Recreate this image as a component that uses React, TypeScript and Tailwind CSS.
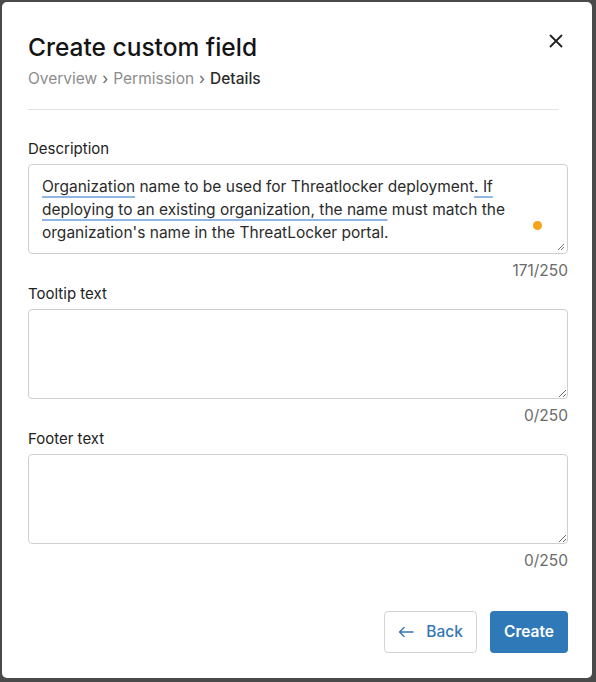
import React from "react";

const font = { fontFamily: "Inter, 'Noto Sans', sans-serif" };

function Counter({ value }: { value: string }) {
  return (
    <div className="text-right text-[15.5px] leading-[20px] text-[#6b6b6b] mt-[7px]">
      {value}
    </div>
  );
}

function Grip() {
  return (
    <svg
      className="absolute right-[2px] bottom-[2px]"
      width="8"
      height="8"
      viewBox="0 0 8 8"
    >
      <path d="M7 1 L1 7 M7 4 L4 7" stroke="#777" strokeWidth="1" />
    </svg>
  );
}

function EmptyArea() {
  return (
    <textarea className="block w-full h-[90px] rounded-[4px] border border-[#cfcfcf] bg-white outline-none resize-y" />
  );
}

export default function App() {
  const ul = "underline decoration-[#8fb6e6] decoration-2 underline-offset-[4px]";
  return (
    <div
      className="w-[596px] h-[682px] bg-[#4a4a4a] pt-[2px] pl-[2px] pr-[4px] pb-[4px]"
      style={font}
    >
      <div className="h-full bg-white rounded-[5px] flex flex-col pl-[26px] pr-[24px]">
        <div className="flex items-start justify-between pt-[30px]">
          <div>
            <h1 className="text-[24.5px] leading-[30px] font-medium text-[#141414]">
              Create custom field
            </h1>
            <div className="flex items-center text-[15.5px] leading-[20px] mt-[7px] text-[#8d8d8d]">
              <span>Overview</span>
              <span className="mx-[5px] text-[#666]">›</span>
              <span>Permission</span>
              <span className="mx-[5px] text-[#666]">›</span>
              <span className="text-[#2b2b2b] font-medium">Details</span>
            </div>
          </div>
          <button className="mt-[2px] mr-[5px] text-[#222]">
            <svg width="14" height="14" viewBox="0 0 14 14">
              <path
                d="M1.5 1.5 L12.5 12.5 M12.5 1.5 L1.5 12.5"
                stroke="currentColor"
                strokeWidth="1.8"
                strokeLinecap="round"
              />
            </svg>
          </button>
        </div>
        <div className="h-px bg-[#e2e2e2] mt-[20px] mr-[9px]" />

        <div className="mt-[29px]">
          <label className="block text-[15px] leading-[20px] text-[#222]">
            Description
          </label>
          <div className="relative mt-[5px] h-[90px] rounded-[4px] border border-[#cfcfcf] bg-white px-[13px] pt-[10px] text-[15.5px] leading-[23px] text-[#2b2b2b] whitespace-nowrap">
            <div>
              <span className={ul}>Organization</span> name to be used for
              Threatlocker deployment<span className={ul}>. If</span>
            </div>
            <div>
              <span className={ul}>deploying to an existing organization, the name</span>{" "}
              must match the
            </div>
            <div>organization's name in the ThreatLocker portal.</div>
            <span className="absolute left-[504px] top-[56px] w-[9px] h-[9px] rounded-full bg-[#f7a21b]" />
            <Grip />
          </div>
          <Counter value="171/250" />
        </div>

        <div className="mt-[3px]">
          <label className="block text-[15px] leading-[20px] text-[#222]">
            Tooltip text
          </label>
          <div className="mt-[5px]">
            <EmptyArea />
          </div>
          <Counter value="0/250" />
        </div>

        <div className="mt-[3px]">
          <label className="block text-[15px] leading-[20px] text-[#222]">
            Footer text
          </label>
          <div className="mt-[5px]">
            <EmptyArea />
          </div>
          <Counter value="0/250" />
        </div>

        <div className="flex justify-end gap-[13px] mt-[40px]">
          <button className="h-[42px] w-[93px] rounded-[4px] border border-[#d3d3d3] bg-white flex items-center justify-center gap-[12px] text-[15.5px] font-medium text-[#3577b5]">
            <svg width="16" height="12" viewBox="0 0 16 12">
              <path
                d="M15 6 H2 M6 1.5 L1.5 6 L6 10.5"
                fill="none"
                stroke="currentColor"
                strokeWidth="1.4"
                strokeLinecap="round"
                strokeLinejoin="round"
              />
            </svg>
            Back
          </button>
          <button className="h-[42px] w-[78px] rounded-[4px] bg-[#2f79b9] text-white text-[15.5px] font-semibold">
            Create
          </button>
        </div>
      </div>
    </div>
  );
}
